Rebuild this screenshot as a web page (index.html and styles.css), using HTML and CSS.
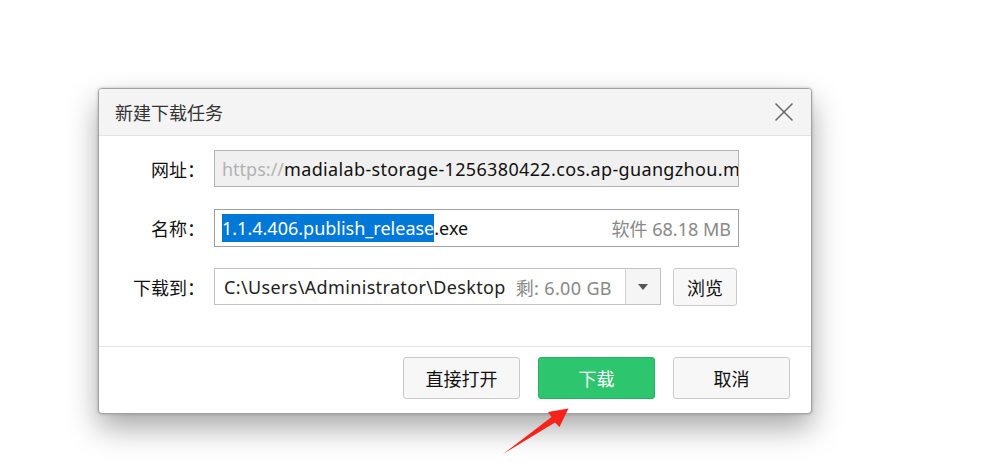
FILE: index.html
```html
<!DOCTYPE html>
<html lang="zh-CN">
<head>
<meta charset="utf-8">
<title>新建下载任务</title>
<link rel="stylesheet" href="styles.css">
</head>
<body>
<div class="stage">
  <div class="dialog">
    <div class="titlebar">
      <span class="title">新建下载任务</span>
      <button class="close" aria-label="关闭">
        <svg width="20" height="20" viewBox="0 0 20 20"><path d="M1.5 1.5 L18.5 18.5 M18.5 1.5 L1.5 18.5" stroke="#666" stroke-width="1.5" fill="none"/></svg>
      </button>
    </div>
    <div class="body">
      <div class="row">
        <span class="label">网址：</span>
        <div class="field url"><span class="proto">https://</span>madialab-storage-1256380422.cos.ap-guangzhou.myqcloud.com/</div>
      </div>
      <div class="row">
        <span class="label">名称：</span>
        <div class="field name"><span class="fname"><span class="sel">1.1.4.406.publish_release</span>.exe</span><span class="meta">软件 68.18 MB</span></div>
      </div>
      <div class="row">
        <span class="label">下载到：</span>
        <div class="combo">
          <div class="combo-text">C:\Users\Administrator\Desktop<span class="meta free">剩: 6.00 GB</span></div>
          <div class="combo-btn"><span class="caret"></span></div>
        </div>
        <button class="btn browse">浏览</button>
      </div>
    </div>
    <div class="footer">
      <button class="btn big">直接打开</button>
      <button class="btn big primary">下载</button>
      <button class="btn big">取消</button>
    </div>
  </div>
  <svg class="arrow" width="983" height="471" viewBox="0 0 983 471">
    <polygon points="503,454 551.5,417 548,412 568.5,408.5 559.5,427 555,422.5" fill="#f5231c"/>
  </svg>
</div>
</body>
</html>
```
FILE: styles.css
```css
* { box-sizing: border-box; }
html, body { margin: 0; padding: 0; background: #fff; }
body {
  font-family: "Noto Sans", "Noto Sans CJK SC", sans-serif;
  font-size: 18px;
  color: #111;
}
.stage {
  position: relative;
  width: 983px;
  height: 471px;
  padding: 88px 0 0 98px;
}
.dialog {
  width: 714px;
  height: 326px;
  border: 1px solid #a3a3a3;
  border-radius: 4px;
  background: #fff;
  box-shadow: 0 14px 30px rgba(0,0,0,0.34), 0 0 3px rgba(0,0,0,0.25);
  display: flex;
  flex-direction: column;
  overflow: hidden;
}
.titlebar {
  height: 47px;
  background: #f4f4f4;
  border-bottom: 1px solid #e2e2e2;
  display: flex;
  align-items: center;
  justify-content: space-between;
  padding: 0 17px 0 16px;
}
.title {
  font-family: "Noto Sans CJK SC", sans-serif;
  font-size: 18px;
  color: #333;
}
.close {
  border: 0;
  background: transparent;
  padding: 0;
  width: 20px;
  height: 20px;
  display: flex;
}
.body {
  height: 211px;
  border-bottom: 1px solid #e4e4e4;
  padding-top: 14px;
  display: flex;
  flex-direction: column;
  gap: 22px;
}
.row {
  display: flex;
  align-items: center;
  height: 37px;
}
.label {
  width: 106px;
  text-align: right;
  margin-right: 9px;
  font-family: "Noto Sans CJK SC", sans-serif;
  color: #111;
}
.field {
  width: 525px;
  height: 37px;
  border: 1px solid #ababab;
  display: flex;
  align-items: center;
  padding: 0 7px;
  white-space: nowrap;
  overflow: hidden;
}
.url { background: #f0f0f0; border-color: #b4b4b4; letter-spacing: 0.35px; }
.proto { color: #b3b3b3; letter-spacing: 0; }
.name { justify-content: space-between; border-color: #a0a0a0; height: 38px; }
.sel { background: #0078d7; color: #fff; padding: 2px 0; }
.meta { color: #888; }
.combo {
  width: 447px;
  height: 37px;
  border: 1px solid #c2c2c2;
  display: flex;
}
.combo-text {
  flex: 1;
  display: flex;
  align-items: center;
  padding-left: 9px;
  white-space: nowrap;
  overflow: hidden;
  color: #222;
  letter-spacing: 0.35px;
}
.free { margin-left: 10px; }
.combo-btn {
  width: 35px;
  border-left: 1px solid #d0d0d0;
  background: #f5f5f5;
  display: flex;
  align-items: center;
  justify-content: center;
}
.caret {
  width: 0; height: 0;
  border-left: 5px solid transparent;
  border-right: 5px solid transparent;
  border-top: 6px solid #555;
}
.btn {
  font-family: "Noto Sans CJK SC", sans-serif;
  font-size: 18px;
  color: #111;
  background: #f7f7f7;
  border: 1px solid #cacaca;
  border-radius: 3px;
  padding: 0;
}
.browse { width: 64px; height: 38px; margin-left: 12px; }
.footer {
  flex: 1;
  display: flex;
  justify-content: flex-end;
  gap: 18px;
  padding: 10px 21px 0 0;
}
.big { width: 117px; height: 42px; }
.primary {
  background: #2ec56f;
  border-color: #26b262;
  color: #fff;
}
.arrow {
  position: absolute;
  left: 0; top: 0;
  pointer-events: none;
}
```
